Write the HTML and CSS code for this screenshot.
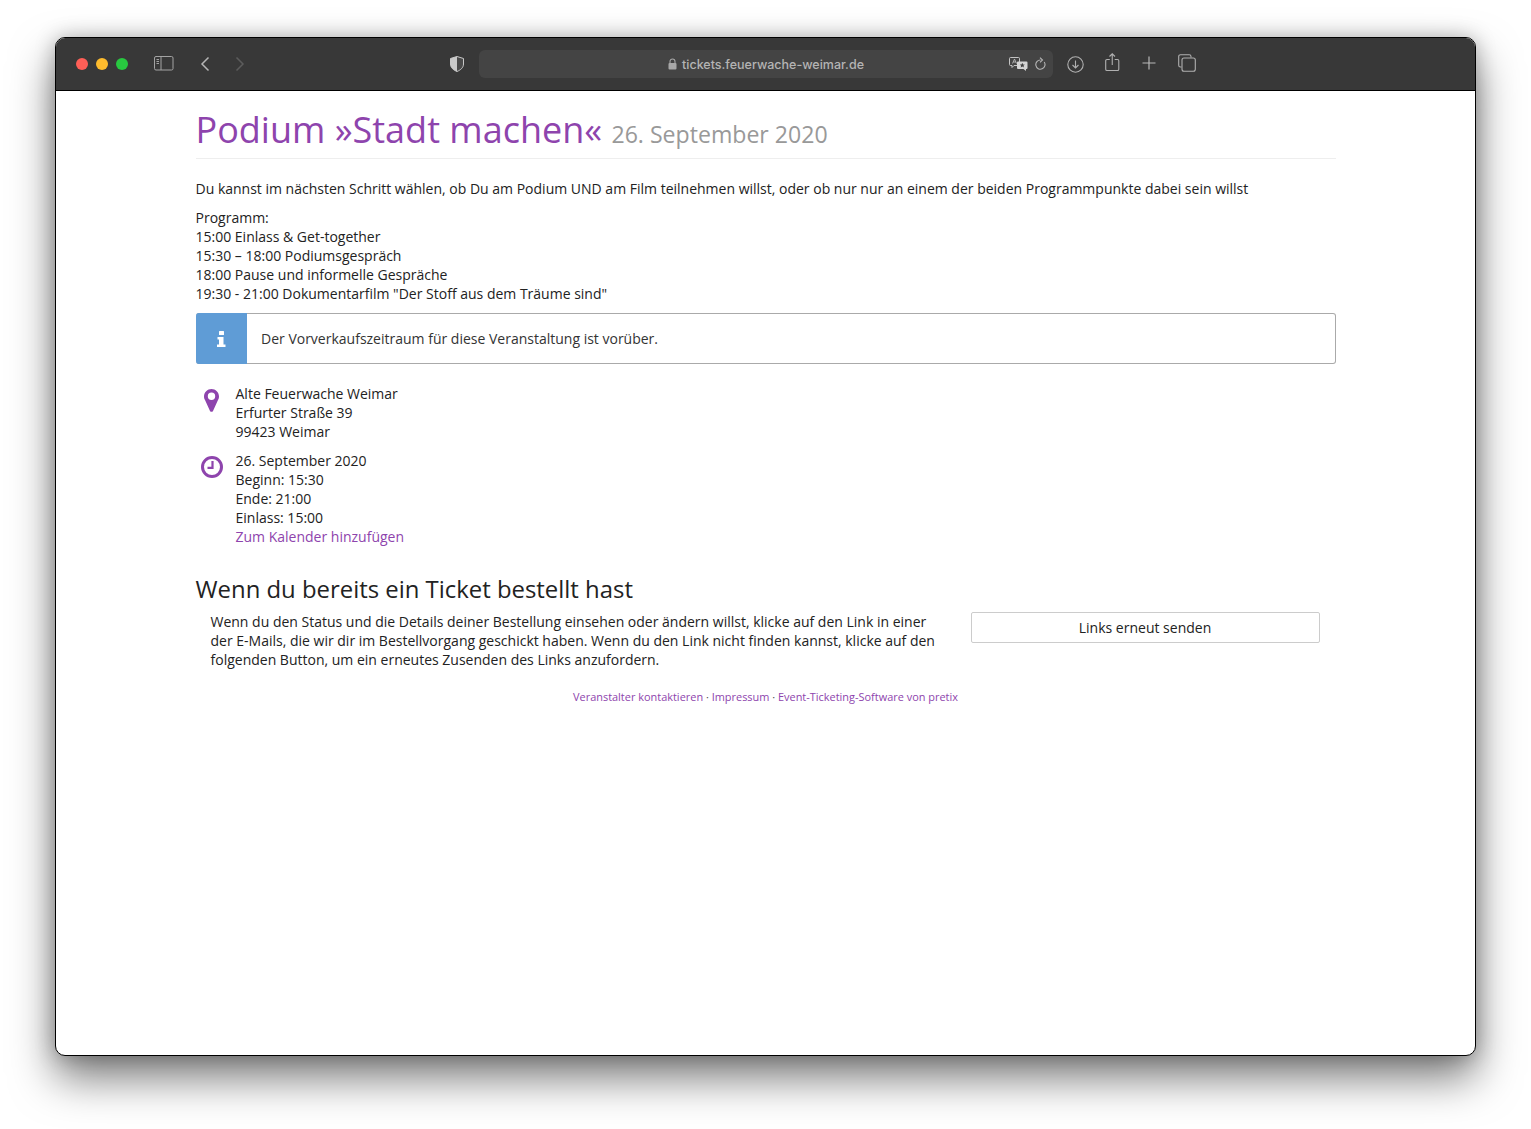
FILE: index.html
```html
<!DOCTYPE html>
<html lang="de">
<head>
<meta charset="utf-8">
<title>Podium »Stadt machen«</title>
<link rel="stylesheet" href="styles.css">
</head>
<body>
<div class="window">
  <header class="toolbar">
    <div class="lights">
      <span class="light red"></span><span class="light yellow"></span><span class="light green"></span>
    </div>
    <svg class="tb-sidebar" width="20" height="15" viewBox="0 0 20 15" fill="none" stroke="#a3a3a3" stroke-width="1"><rect x="0.5" y="0.5" width="18.5" height="13.5" rx="1.5"/><path d="M7 .5v13.5"/><path d="M2.5 3.5h2.5M2.5 5.5h2.5M2.5 7.5h2.5" stroke-width="1"/></svg>
    <svg class="tb-back" width="10" height="16" viewBox="0 0 10 16" fill="none" stroke="#b5b5b5" stroke-width="1.5"><path d="M8.5 1.5 2 8l6.5 6.5"/></svg>
    <svg class="tb-forward" width="10" height="16" viewBox="0 0 10 16" fill="none" stroke="#5c5c5c" stroke-width="1.5"><path d="M1.5 1.5 8 8l-6.5 6.5"/></svg>
    <svg class="tb-shield" width="14" height="16" viewBox="0 0 14 16"><path d="M7 .5 13.5 2.5V8c0 3.6-2.8 6-6.5 7.5C3.3 14 .5 11.6.5 8V2.500z" fill="#4a4a4a" stroke="#c9c9c9" stroke-width="1"/><path d="M7 .5V15.500C3.300 14 .5 11.600.5 8V2.500z" fill="#c9c9c9"/></svg>
    <div class="urlbar">
      <span class="url">
        <svg width="9" height="12" viewBox="0 0 9 12"><path d="M2 5.500V3.500a2.500 2.500 0 0 1 5 0v2" fill="none" stroke="#a8a8a8" stroke-width="1.100"/><rect x="0.500" y="5" width="8" height="6.500" rx="1" fill="#a8a8a8"/></svg>
        <span>tickets.feuerwache-weimar.de</span>
      </span>
      <svg class="tb-translate" width="19" height="14" viewBox="0 0 19 14"><path d="M1.500.5h8a1 1 0 0 1 1 1v6a1 1 0 0 1-1 1H5l-2 2v-2H1.500a1 1 0 0 1-1-1v-6a1 1 0 0 1 1-1z" fill="none" stroke="#c4c4c4"/><path d="M3.500 6.500 5.500 2l2 4.500M4.200 5h2.600" fill="none" stroke="#c4c4c4" stroke-width=".8"/><path d="M9 4.500h8.500a1 1 0 0 1 1 1V11a1 1 0 0 1-1 1H17v2l-2.500-2H9a1 1 0 0 1-1-1V5.500a1 1 0 0 1 1-1z" fill="#d4d4d4"/><path d="M13.300 5.800l.8 1.600 1.700.2-1.300 1.200.4 1.700-1.600-.9-1.600.9.400-1.700-1.300-1.200 1.700-.2z" fill="#444"/></svg>
      <svg class="tb-reload" width="11" height="14" viewBox="0 0 11 14" fill="none" stroke="#b5b5b5" stroke-width="1.100"><path d="M5.500 3A4.600 4.600 0 1 0 9.200 5"/><path d="M5 .6 7.500 3 5 5.400"/></svg>
    </div>
    <svg class="tb-download" width="17" height="17" viewBox="0 0 17 17" fill="none" stroke="#b0b0b0" stroke-width="1.100"><circle cx="8.500" cy="8.500" r="7.700"/><path d="M8.500 4.500v7.500M5.500 9l3 3 3-3"/></svg>
    <svg class="tb-share" width="15" height="19" viewBox="0 0 15 19" fill="none" stroke="#b0b0b0" stroke-width="1.100"><path d="M4.800 6.500H2a1.300 1.300 0 0 0-1.300 1.300v8.400A1.300 1.300 0 0 0 2 17.500h10.500a1.300 1.300 0 0 0 1.300-1.300V7.800a1.300 1.300 0 0 0-1.300-1.300H9.700"/><path d="M7.250 12V1M4.500 3.500 7.250.8 10 3.500"/></svg>
    <svg class="tb-plus" width="14" height="14" viewBox="0 0 14 14" fill="none" stroke="#b8b8b8" stroke-width="1.200"><path d="M7 .5v13M.5 7h13"/></svg>
    <svg class="tb-tabs" width="18" height="18" viewBox="0 0 18 18" fill="none" stroke="#b0b0b0" stroke-width="1.100"><path d="M3.500 13H2.500A1.800 1.800 0 0 1 .7 11.200V2.500A1.800 1.800 0 0 1 2.500.7h8.700A1.800 1.800 0 0 1 13 2.500v1"/><rect x="4" y="4" width="13.300" height="13.300" rx="2"/></svg>
  </header>

  <main class="page">
    <h1 class="title">Podium »Stadt machen« <small class="date">26. September 2020</small></h1>
    <p class="intro">Du kannst im nächsten Schritt wählen, ob Du am Podium UND am Film teilnehmen willst, oder ob nur nur an einem der beiden Programmpunkte dabei sein willst</p>
    <p class="program">Programm:<br>15:00 Einlass &amp; Get-together<br>15:30 – 18:00 Podiumsgespräch<br>18:00 Pause und informelle Gespräche<br>19:30 - 21:00 Dokumentarfilm "Der Stoff aus dem Träume sind"</p>

    <div class="alert">
      <div class="alert-icon">
        <svg width="9" height="16" viewBox="0 0 9 16" fill="#fff"><rect x="2" y="0" width="5" height="4" rx=".5"/><path d="M.5 6h6v7.500h2V16H0v-2.500h2V8.500H.5z"/></svg>
      </div>
      <div class="alert-text">Der Vorverkaufszeitraum für diese Veranstaltung ist vorüber.</div>
    </div>

    <div class="info-row">
      <div class="info-icon">
        <svg class="icon-pin" width="15" height="23" viewBox="0 0 15 23"><path fill-rule="evenodd" d="M7.500 0C3.400 0 0 3.300 0 7.400c0 1.500.4 2.500 1 3.700l5 10.800c.6 1.200 2.400 1.200 3 0l5-10.800c.6-1.200 1-2.200 1-3.700C15 3.300 11.600 0 7.500 0zm0 11a3.700 3.700 0 1 1 0-7.400 3.700 3.700 0 0 1 0 7.400z" fill="#8e44ad"/></svg>
      </div>
      <div class="info-text">Alte Feuerwache Weimar<br>Erfurter Straße 39<br>99423 Weimar</div>
    </div>
    <div class="info-row">
      <div class="info-icon">
        <svg class="icon-clock" width="22" height="22" viewBox="0 0 22 22" fill="none" stroke="#8e44ad"><circle cx="11" cy="11" r="9.500" stroke-width="3"/><path d="M11.500 5v6.800H6.500" stroke-width="2.200"/></svg>
      </div>
      <div class="info-text">26. September 2020<br>Beginn: 15:30<br>Ende: 21:00<br>Einlass: 15:00<br><a class="link" href="#">Zum Kalender hinzufügen</a></div>
    </div>

    <h2 class="subhead">Wenn du bereits ein Ticket bestellt hast</h2>
    <div class="resend">
      <p class="resend-text">Wenn du den Status und die Details deiner Bestellung einsehen oder ändern willst, klicke auf den Link in einer der E-Mails, die wir dir im Bestellvorgang geschickt haben. Wenn du den Link nicht finden kannst, klicke auf den folgenden Button, um ein erneutes Zusenden des Links anzufordern.</p>
      <div class="resend-action"><a class="button" href="#">Links erneut senden</a></div>
    </div>

    <footer class="foot"><a class="link" href="#">Veranstalter kontaktieren</a> · <a class="link" href="#">Impressum</a> · <a class="link" href="#">Event-Ticketing-Software von pretix</a></footer>
  </main>
</div>
</body>
</html>
```
FILE: styles.css
```css
* { box-sizing: border-box; }
html, body { margin: 0; height: 100%; }
body {
  background: #fff;
  padding: 37px 55px 0;
  font-family: "Open Sans", "Noto Sans", sans-serif;
  font-size: 14px;
  line-height: 19px;
  color: #222;
  overflow: hidden;
}
.window {
  width: 1421px;
  height: 1019px;
  background: #fff;
  border: 1px solid #000;
  border-radius: 10px;
  box-shadow: 0 22px 44px rgba(0, 0, 0, .52), 0 0 20px rgba(0, 0, 0, .25);
  overflow: hidden;
}
.toolbar {
  height: 53px;
  background: #383838;
  border-bottom: 1px solid #000;
  display: flex;
  align-items: center;
  padding-left: 20px;
}
.lights { display: flex; gap: 8px; }
.light { width: 12px; height: 12px; border-radius: 50%; }
.red { background: #ff5f57; }
.yellow { background: #febc2e; }
.green { background: #28c840; }
.tb-sidebar { margin-left: 26px; margin-bottom: 1px; }
.tb-back { margin-left: 26px; }
.tb-forward { margin-left: 25px; }
.tb-shield { margin-left: 205px; }
.urlbar {
  width: 574px;
  height: 28px;
  margin-left: 15px;
  background: #444;
  border-radius: 6px;
  display: flex;
  align-items: center;
  position: relative;
  justify-content: center;
}
.url {
  display: flex;
  align-items: center;
  gap: 5px;
  font-family: Inter, "Liberation Sans", sans-serif;
  font-size: 12.500px;
  font-weight: 500;
  color: #b4b4b4;
}
.tb-translate { position: absolute; left: 530px; top: 7px; }
.tb-reload { position: absolute; left: 556px; top: 7px; }
.tb-download { margin-left: 14px; }
.tb-share { margin-left: 21px; margin-bottom: 3px; }
.tb-plus { margin-left: 22px; margin-bottom: 2px; }
.tb-tabs { margin-left: 22px; margin-bottom: 2px; }

.page {
  width: 1140px;
  margin: 0 auto;
}
.title {
  margin: 0;
  height: 68px;
  padding-top: 15px;
  border-bottom: 1px solid #eee;
  font-size: 36px;
  line-height: 48px;
  font-weight: 400;
  color: #8e44ad;
  white-space: nowrap;
}
.date {
  font-size: 23.100px;
  color: #999;
  font-weight: 400;
}
.intro { margin: 20px 0 10px; }
.program { margin: 0 0 10px; }
.alert {
  display: flex;
  height: 51px;
  border: 1px solid #aaa;
  border-left: 0;
  border-radius: 3px;
  margin-bottom: 20px;
}
.alert-icon {
  width: 51px;
  margin: -1px 0;
  background: #5f9cd6;
  border-radius: 3px 0 0 3px;
  display: flex;
  align-items: center;
  justify-content: center;
}
.alert-text {
  padding-left: 14.500px;
  display: flex;
  align-items: center;
  font-size: 14px;
  color: #333;
}
.info-row { display: flex; margin-bottom: 10px; }
.info-icon {
  width: 40px;
  flex: none;
  display: flex;
  justify-content: center;
  padding-right: 8px;
}
.icon-pin { margin-top: 4.500px; }
.icon-clock { margin-top: 5px; }
.info-text { flex: 1; }
.link { color: #8e44ad; text-decoration: none; }
.subhead {
  margin: 26px 0 6px;
  font-size: 23.900px;
  line-height: 34px;
  font-weight: 400;
  color: #222;
}
.resend { display: flex; padding: 0 15px; }
.resend-text { margin: 0; width: 730px; }
.resend-action { margin-left: 30px; width: 349px; }
.button {
  display: block;
  height: 31px;
  border: 1px solid #ccc;
  border-radius: 2px;
  background: #fff;
  color: #222;
  text-align: center;
  line-height: 30px;
  text-decoration: none;
}
.foot {
  margin-top: 20px;
  text-align: center;
  font-size: 10.950px;
  line-height: 16px;
  color: #555;
}
```
